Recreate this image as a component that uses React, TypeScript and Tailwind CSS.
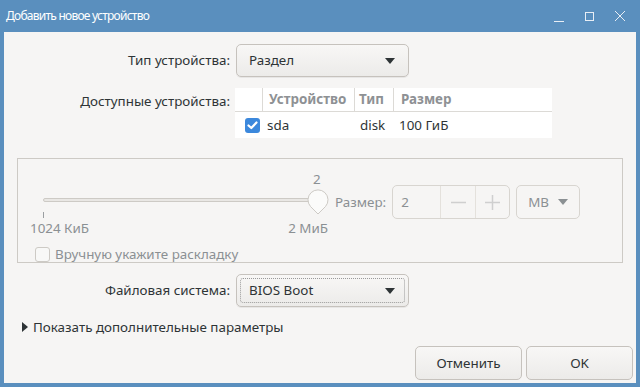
import React from 'react';

const font = { fontFamily: '"Noto Sans", "Open Sans", sans-serif' };

const Arrow = ({ color = '#2e3436' }: { color?: string }) => (
  <svg width="10" height="6" viewBox="0 0 10 6">
    <path d="M0 0 L10 0 L5 6 Z" fill={color} />
  </svg>
);

const Combo = ({ value, focused }: { value: string; focused?: boolean }) => (
  <div className="ml-[6px] h-[33px] w-[173px] rounded-[5px] border border-[#c6c2bd] bg-gradient-to-b from-[#f8f7f6] to-[#ecebe9] p-[3px] shadow-[0_1px_0_rgba(0,0,0,0.06)]">
    <div
      className={
        'flex h-full items-center justify-between rounded-[3px] pl-[8px] pr-[9px] ' +
        (focused ? 'border border-dotted border-[#9a9a9a]' : 'border border-transparent')
      }
    >
      <span className="text-[13.4px] text-[#2e3436]">{value}</span>
      <Arrow />
    </div>
  </div>
);

const App: React.FC = () => {
  return (
    <div className="h-[387px] w-[640px] bg-[#5a8fbe] px-[4px] pb-[4px]" style={font}>
      {/* Title bar */}
      <div className="flex h-[32px] items-center justify-between pl-[2px] pr-[10px] text-white">
        <span className="text-[12px] tracking-[-0.75px]">Добавить новое устройство</span>
        <div className="flex items-center gap-[19px]">
          <svg width="11" height="11" viewBox="0 0 11 11">
            <path d="M0 10.5 H10" stroke="#e8eef5" strokeWidth="1" />
          </svg>
          <svg width="11" height="11" viewBox="0 0 11 11">
            <rect x="1.5" y="1.5" width="8" height="8" fill="none" stroke="#e8eef5" strokeWidth="1" />
          </svg>
          <svg width="12" height="12" viewBox="0 0 12 12">
            <path d="M1 1 L11 11 M11 1 L1 11" stroke="#e8eef5" strokeWidth="1" />
          </svg>
        </div>
      </div>

      {/* Content */}
      <div className="flex h-[351px] flex-col bg-[#f6f5f4] text-[13.4px] text-[#2e3436]">
        <div className="mt-[12px] flex items-center">
          <div className="w-[226px] text-right">Тип устройства:</div>
          <Combo value="Раздел" />
        </div>

        <div className="mt-[11px] flex items-start">
          <div className="w-[226px] pt-[3px] text-right">Доступные устройства:</div>
          <div className="ml-[5px] w-[317px] bg-white">
            <div className="flex h-[24px] items-center border-b border-[#dcdad6] font-bold text-[#8e9194]">
              <div className="h-full w-[28px] border-r border-[#dcdad6]" />
              <div className="flex h-full w-[92px] items-center border-r border-[#dcdad6] pl-[6px]">Устройство</div>
              <div className="flex h-full w-[39px] items-center border-r border-[#dcdad6] pl-[4px]">Тип</div>
              <div className="flex h-full items-center pl-[7px]">Размер</div>
            </div>
            <div className="flex h-[26px] items-center">
              <div className="flex w-[28px] justify-center pl-[6px]">
                <div className="flex h-[15px] w-[15px] items-center justify-center rounded-[3px] bg-[#3c88dc]">
                  <svg width="11" height="9" viewBox="0 0 11 9">
                    <path d="M1.5 4.5 L4.3 7 L9.5 1.5" fill="none" stroke="white" strokeWidth="2.2" strokeLinecap="round" strokeLinejoin="round" />
                  </svg>
                </div>
              </div>
              <div className="w-[92px] pl-[4px]">sda</div>
              <div className="w-[39px] pl-[5px]">disk</div>
              <div className="pl-[5px]">100 ГиБ</div>
            </div>
          </div>
        </div>

        {/* Frame */}
        <div className="mx-[13px] mt-[20px] h-[105px] border border-[#cdcac5] text-[#8b9093]">
          <div className="flex items-start">
            {/* slider */}
            <div className="ml-[12px] mt-[11px] w-[300px]">
              <div className="pl-[283px] leading-[18px]">2</div>
              <div className="relative h-[24px]">
                <div className="absolute left-[13px] top-[10px] h-[4px] w-[270px] rounded-full border border-[#cdcac5] bg-[#e9e7e4]" />
                <svg className="absolute left-[276px] top-[1px]" width="24" height="27" viewBox="0 0 24 27">
                  <path
                    d="M12 25 L4.5 17.5 A10 10 0 1 1 19.5 17.5 Z"
                    fill="#fbfbfa"
                    stroke="#cdcac5"
                    strokeWidth="1"
                  />
                </svg>
              </div>
              <div className="ml-[13px] h-[6px] w-px bg-[#9a9ea1]" />
              <div className="flex justify-between pr-[2px] leading-[20px]">
                <span>1024 КиБ</span>
                <span>2 МиБ</span>
              </div>
            </div>
            <div className="ml-[5px] mt-[26px] flex items-center">
              <span>Размер:</span>
              <div className="ml-[6px] flex h-[34px] w-[118px] rounded-[5px] border border-[#d8d5d0] bg-[#f6f5f4]">
                <div className="flex w-[47px] items-center pl-[8px]">2</div>
                <div className="flex w-[35px] items-center justify-center border-l border-[#e4e1dc]">
                  <svg width="15" height="15" viewBox="0 0 15 15">
                    <path d="M0 7.5 H15" stroke="#cfcfcf" strokeWidth="1.5" />
                  </svg>
                </div>
                <div className="flex flex-1 items-center justify-center border-l border-[#e4e1dc]">
                  <svg width="15" height="15" viewBox="0 0 15 15">
                    <path d="M0 7.5 H15 M7.5 0 V15" stroke="#cfcfcf" strokeWidth="1.5" />
                  </svg>
                </div>
              </div>
              <div className="ml-[6px] flex h-[34px] w-[64px] items-center gap-[9px] rounded-[5px] border border-[#d8d5d0] pl-[11px]">
                <span>MB</span>
                <Arrow color="#8b9093" />
              </div>
            </div>
          </div>
          <div className="ml-[17px] mt-[6px] flex items-center">
            <div className="h-[15px] w-[15px] rounded-[3px] border border-[#cdcac5] bg-[#f8f8f7]" />
            <span className="ml-[5px]">Вручную укажите раскладку</span>
          </div>
        </div>

        <div className="mt-[11px] flex items-center">
          <div className="w-[226px] text-right">Файловая система:</div>
          <Combo value="BIOS Boot" focused />
        </div>

        <div className="ml-[18px] mt-[10px] flex items-center">
          <svg width="6" height="10" viewBox="0 0 6 10">
            <path d="M0 0 L6 5 L0 10 Z" fill="#2e3436" />
          </svg>
          <span className="ml-[5px]">Показать дополнительные параметры</span>
        </div>

        <div className="mr-[3px] mt-auto mb-[3px] flex justify-end gap-[4px]">
          <button className="h-[34px] w-[107px] rounded-[5px] border border-[#c6c2bd] bg-gradient-to-b from-[#f8f7f6] to-[#ecebe9] text-[13.4px] text-[#2e3436]">
            Отменить
          </button>
          <button className="h-[34px] w-[107px] rounded-[5px] border border-[#c6c2bd] bg-gradient-to-b from-[#f8f7f6] to-[#ecebe9] text-[13.4px] text-[#2e3436]">
            OK
          </button>
        </div>
      </div>
    </div>
  );
};

export default App;
